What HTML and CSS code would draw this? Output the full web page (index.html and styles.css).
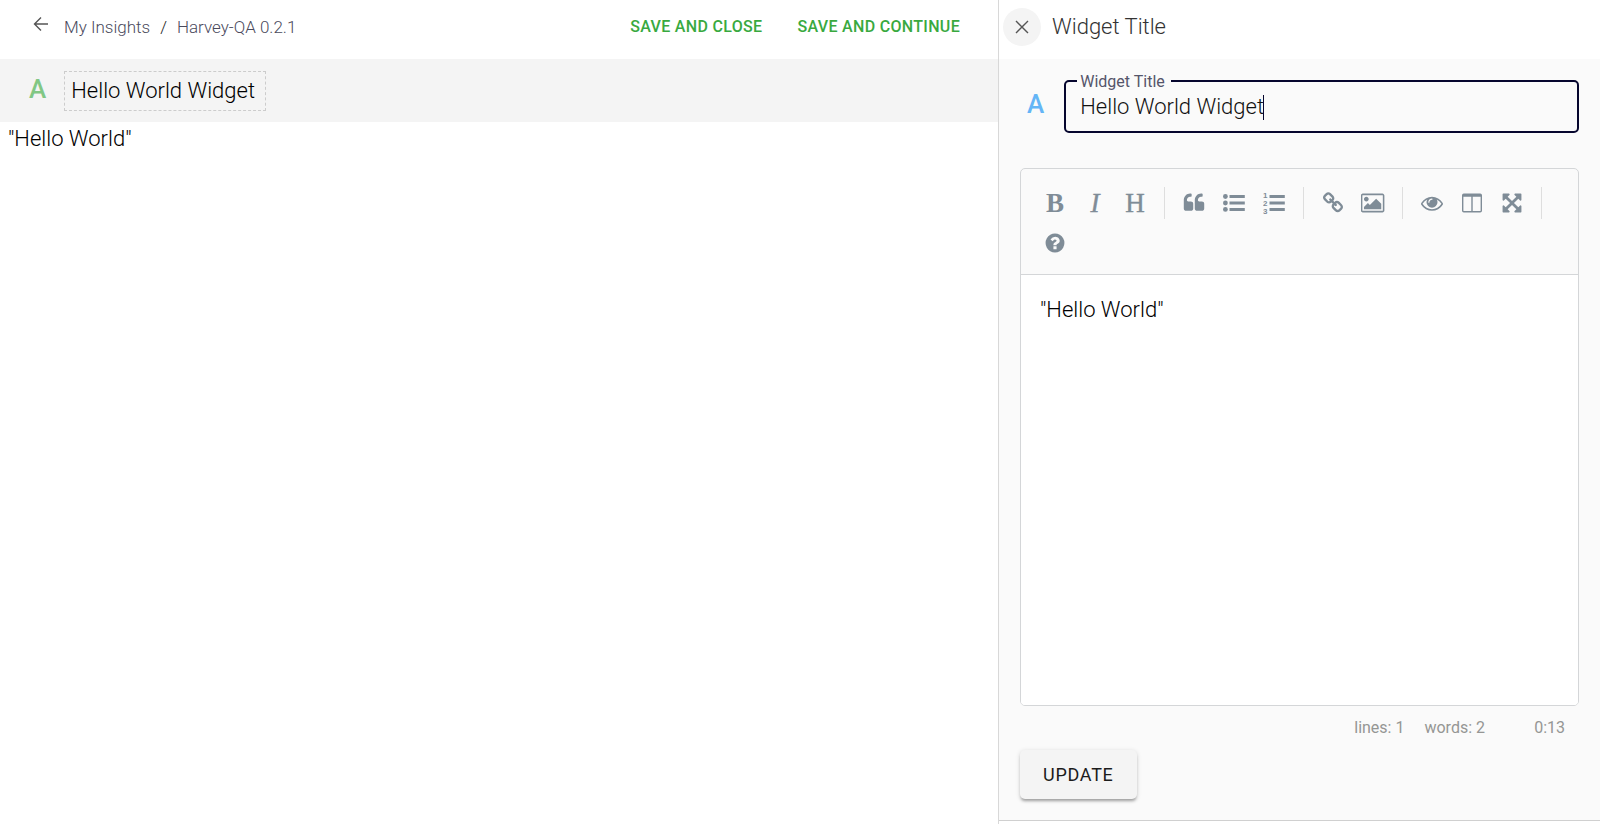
FILE: index.html
```html
<!DOCTYPE html>
<html lang="en">
<head>
<meta charset="utf-8">
<title>Harvey-QA 0.2.1 - My Insights</title>
<link rel="stylesheet" href="styles.css">
</head>
<body>
<div class="app">
  <main class="preview">
    <header class="topbar">
      <button class="back" type="button" aria-label="Back">
        <svg width="24" height="24" viewBox="0 0 24 24" fill="none" stroke="currentColor" stroke-width="1.4"><path d="M20 12H6.500M13 5.500L6.500 12l6.500 6.500"/></svg>
      </button>
      <nav class="crumbs" aria-label="Breadcrumb">
        <a href="#">My Insights</a><span>/</span><a href="#">Harvey-QA 0.2.1</a>
      </nav>
      <div class="actions">
        <button type="button">SAVE AND CLOSE</button>
        <button type="button">SAVE AND CONTINUE</button>
      </div>
    </header>
    <div class="widget-bar">
      <span class="type-icon type-green">A</span>
      <h1 class="widget-name">Hello World Widget</h1>
    </div>
    <p class="widget-body">"Hello World"</p>
  </main>

  <aside class="panel">
    <header class="panel-head">
      <button class="close" type="button" aria-label="Close">
        <svg width="14" height="14" viewBox="0 0 14 14" fill="none" stroke="currentColor" stroke-width="1.4"><path d="M1 1l12 12M13 1L1 13"/></svg>
      </button>
      <h2>Widget Title</h2>
    </header>
    <form class="panel-body">
      <div class="title-row">
        <span class="type-icon type-blue">A</span>
        <fieldset class="field">
          <legend><label for="title">Widget Title</label></legend>
          <input id="title" type="text" value="Hello World Widget">
          <span class="caret"></span>
        </fieldset>
      </div>

      <div class="editor">
        <div class="toolbar" role="toolbar" aria-label="Formatting">
          <button type="button" class="bold" aria-label="Bold">B</button>
          <button type="button" class="italic" aria-label="Italic">I</button>
          <button type="button" class="heading" aria-label="Heading">H</button>
          <i class="sep"></i>
          <button type="button" aria-label="Quote"><svg width="22" height="22" viewBox="0 0 1792 1792"><path d="M832 960v384q0 80-56 136t-136 56h-384q-80 0-136-56t-56-136v-704q0-104 40.500-198.500t109.500-163.500 163.500-109.500 198.500-40.500h64q26 0 45 19t19 45v128q0 26-19 45t-45 19h-64q-106 0-181 75t-75 181v32q0 40 28 68t68 28h224q80 0 136 56t56 136zm896 0v384q0 80-56 136t-136 56h-384q-80 0-136-56t-56-136v-704q0-104 40.500-198.500t109.500-163.500 163.500-109.500 198.500-40.500h64q26 0 45 19t19 45v128q0 26-19 45t-45 19h-64q-106 0-181 75t-75 181v32q0 40 28 68t68 28h224q80 0 136 56t56 136z"/></svg></button>
          <button type="button" aria-label="Bulleted list"><svg width="22" height="22" viewBox="0 0 22 22"><circle cx="2.400" cy="4.500" r="2.400"/><circle cx="2.400" cy="11" r="2.400"/><circle cx="2.400" cy="17.400" r="2.400"/><path d="M6.500 3h15.300v3H6.500zM6.500 9.500h15.300v3H6.500zM6.500 15.900h15.300v3H6.500z"/></svg></button>
          <button type="button" aria-label="Numbered list"><svg class="numbers" width="22" height="26" viewBox="0 -2 22 26"><text x="0" y="6">1</text><text x="0" y="14">2</text><text x="0" y="22">3</text><path d="M6.500 3h15.300v3H6.500zM6.500 9.500h15.300v3H6.500zM6.500 15.900h15.300v3H6.500z"/></svg></button>
          <i class="sep"></i>
          <button type="button" aria-label="Link"><svg width="22" height="22" viewBox="0 0 1792 1792"><path d="M1520 1216q0-40-28-68l-208-208q-28-28-68-28-42 0-72 32 3 3 19 18.500t21.500 21.500 15 19 13 25.500 3.500 27.500q0 40-28 68t-68 28q-15 0-27.500-3.500t-25.500-13-19-15-21.500-21.500-18.500-19q-33 31-33 73 0 40 28 68l206 207q27 27 68 27 40 0 68-26l147-146q28-28 28-67zm-703-705q0-40-28-68l-206-207q-28-28-68-28-39 0-68 27l-147 146q-28 28-28 67 0 40 28 68l208 208q27 27 68 27 42 0 72-31-3-3-19-18.500t-21.500-21.500-15-19-13-25.500-3.500-27.500q0-40 28-68t68-28q15 0 27.500 3.500t25.500 13 19 15 21.500 21.500 18.500 19q33-31 33-73zm895 705q0 120-85 203l-147 146q-83 83-203 83-121 0-204-85l-206-207q-83-83-83-203 0-123 88-209l-88-88q-86 88-208 88-120 0-204-84l-208-208q-84-84-84-204t85-203l147-146q83-83 203-83 121 0 204 85l206 207q83 83 83 203 0 123-88 209l88 88q86-88 208-88 120 0 204 84l208 208q84 84 84 204z"/></svg></button>
          <button type="button" aria-label="Image"><svg width="24" height="22" viewBox="-32 0 1920 1792"><path d="M576 576q0 80-56 136t-136 56-136-56-56-136 56-136 136-56 136 56 56 136zm1024 384v448h-1408v-192l320-320 160 160 512-512zm96-704h-1600q-13 0-22.500 9.500t-9.500 22.500v1216q0 13 9.500 22.500t22.500 9.500h1600q13 0 22.500-9.500t9.500-22.500v-1216q0-13-9.500-22.500t-22.500-9.500zm160 32v1216q0 66-47 113t-113 47h-1600q-66 0-113-47t-47-113v-1216q0-66 47-113t113-47h1600q66 0 113 47t47 113z"/></svg></button>
          <i class="sep"></i>
          <button type="button" aria-label="Preview"><svg width="22" height="22" viewBox="0 0 1792 1792"><path d="M1664 960q-152-236-381-353 61 104 61 225 0 185-131.500 316.500t-316.500 131.500-316.500-131.500-131.500-316.500q0-121 61-225-229 117-381 353 133 205 333.500 326.500t434.500 121.500 434.500-121.500 333.500-326.500zm-720-384q0-20-14-34t-34-14q-125 0-214.500 89.500t-89.500 214.500q0 20 14 34t34 14 34-14 14-34q0-86 61-147t147-61q20 0 34-14t14-34zm848 384q0 34-20 69-140 230-376.500 368.500t-499.500 138.500-499.500-139-376.500-368q-20-35-20-69t20-69q140-229 376.500-368t499.500-139 499.500 139 376.500 368q20 35 20 69z"/></svg></button>
          <button type="button" aria-label="Side by side"><svg width="22" height="22" viewBox="0 0 22 22"><path fill-rule="evenodd" d="M2.800 1.500h16.400q1.800 0 1.800 1.800v15.400q0 1.800-1.800 1.800H2.800Q1 20.500 1 18.700V3.300q0-1.800 1.800-1.800zM2.400 4.800v13.600q0 .7.700.7h7.200V4.800zM11.700 4.800v14.300h7.200q.7 0 .7-.7V4.800z"/></svg></button>
          <button type="button" aria-label="Fullscreen"><svg width="22" height="22" viewBox="0 0 1792 1792"><path d="M1411 541l-355 355 355 355 144-144q29-31 70-14 39 17 39 59v448q0 26-19 45t-45 19h-448q-42 0-59-40-17-39 14-69l144-144-355-355-355 355 144 144q31 30 14 69-17 40-59 40h-448q-26 0-45-19t-19-45v-448q0-42 40-59 39-17 69 14l144 144 355-355-355-355-144 144q-19 19-45 19-12 0-24-5-40-17-40-59v-448q0-26 19-45t45-19h448q42 0 59 40 17 39-14 69l-144 144 355 355 355-355-144-144q-31-30-14-69 17-40 59-40h448q26 0 45 19t19 45v448q0 42-39 59-13 5-25 5-26 0-45-19z"/></svg></button>
          <i class="sep"></i>
          <button type="button" aria-label="Help"><svg width="22" height="22" viewBox="0 0 1792 1792"><path d="M1024 1376v-192q0-14-9-23t-23-9h-192q-14 0-23 9t-9 23v192q0 14 9 23t23 9h192q14 0 23-9t9-23zm256-672q0-88-55.500-163t-138.500-116-170-41q-243 0-371 213-15 24 8 42l132 100q7 6 19 6 16 0 25-12 53-68 86-92 34-24 86-24 48 0 85.500 26t37.500 59q0 38-20 61t-68 45q-63 28-115.500 86.500t-52.500 125.500v36q0 14 9 23t23 9h192q14 0 23-9t9-23q0-19 21.500-49.500t54.500-49.500q32-18 49-28.500t46-35 44.500-48 28-60.500 12.500-81zm384 192q0 209-103 385.500t-279.500 279.500-385.500 103-385.500-103-279.500-279.500-103-385.500 103-385.500 279.500-279.500 385.500-103 385.500 103 279.500 279.500 103 385.500z"/></svg></button>
        </div>
        <textarea class="text" aria-label="Widget text">"Hello World"</textarea>
      </div>
      <div class="status"><span>lines: 1</span><span>words: 2</span><span class="cursor">0:13</span></div>
      <button class="update" type="submit">UPDATE</button>
    </form>
  </aside>
</div>
</body>
</html>
```
FILE: styles.css
```css
* {
  box-sizing: border-box;
}

body {
  margin: 0;
  font-family: Roboto, "Liberation Sans", sans-serif;
  color: #000;
  background: #fff;
}

button {
  padding: 0;
  border: 0;
  background: none;
  font: inherit;
  letter-spacing: inherit;
  color: inherit;
  cursor: pointer;
}

h1,
h2,
p {
  margin: 0;
  font-weight: 300;
}

svg {
  display: block;
  flex: none;
}

.app {
  display: flex;
  min-height: 100vh;
}

.preview {
  flex: 1;
  min-width: 0;
}

.topbar {
  display: flex;
  align-items: center;
  height: 59px;
  padding: 0 38px 6px 28px;
}

.back {
  padding-bottom: 6px;
  color: #555;
}

.crumbs {
  display: flex;
  gap: 10px;
  padding-left: 12px;
  font-size: 17px;
  font-weight: 300;
  line-height: 20px;
  color: #222;
}

.crumbs a {
  color: #4a4a5c;
  text-decoration: none;
}

.actions {
  display: flex;
  gap: 35px;
  margin-left: auto;
  font-size: 16px;
  font-weight: 500;
  letter-spacing: 0.02em;
  color: #39a93f;
}

.widget-bar {
  display: flex;
  align-items: center;
  gap: 18px;
  height: 63px;
  padding: 0 29px;
  background: #f4f4f4;
}

.type-icon {
  font-size: 26px;
  font-weight: 500;
  line-height: 32px;
}

.type-green {
  padding-bottom: 4px;
  color: #81c784;
}

.type-blue {
  padding-top: 4px;
  color: #64b5f6;
}

.widget-name {
  padding: 5px 10px 5px 6px;
  border: 1px dashed #ccc;
  font-size: 22px;
  line-height: 28px;
}

.widget-body {
  padding: 0 8px;
  font-size: 22px;
  line-height: 34px;
}

.panel {
  display: flex;
  flex-direction: column;
  width: 602px;
  padding-bottom: 3px;
  border-left: 1px solid #d8d8d8;
}

.panel-head {
  display: flex;
  align-items: center;
  gap: 11px;
  height: 59px;
  padding: 0 4px 6px;
}

.panel-head h2 {
  font-size: 22px;
  color: #333;
}

.close {
  display: grid;
  place-items: center;
  width: 38px;
  height: 38px;
  border-radius: 50%;
  background: #f4f4f4;
  color: #555;
}

.panel-body {
  display: flex;
  flex: 1;
  flex-direction: column;
  padding: 12px 21px 21px;
  border-bottom: 1px solid #d0d0d0;
  background: #fafafa;
}

.title-row {
  display: flex;
  align-items: center;
  gap: 20px;
  padding-left: 7px;
}

.field {
  position: relative;
  flex: 1;
  min-width: 0;
  margin: 0;
  padding: 0 8px 8px 11px;
  border: 2px solid #06062e;
  border-radius: 5px;
}

.field legend {
  padding: 2px 6px 0 3px;
  font-size: 16px;
  line-height: 18px;
  color: #55556a;
}

.field input {
  display: block;
  width: 100%;
  height: 32px;
  padding: 0 3px;
  border: 0;
  outline: 0;
  background: none;
  font: 300 22px/32px Roboto, "Liberation Sans", sans-serif;
  color: #111;
}

.caret {
  position: absolute;
  left: 197px;
  top: 4px;
  width: 1px;
  height: 25px;
  background: #06062e;
}

.editor {
  display: flex;
  flex: 1;
  flex-direction: column;
  margin-top: 35px;
  border: 1px solid #d4d6d8;
  border-radius: 5px;
  overflow: hidden;
}

.toolbar {
  display: flex;
  flex-wrap: wrap;
  align-items: center;
  padding: 14px 14px 11px;
  border-bottom: 1px solid #d4d6d8;
  color: #7f8c97;
}

.toolbar button {
  display: grid;
  place-items: center;
  width: 40px;
  height: 40px;
  font: 400 27px/30px "Liberation Serif", serif;
}

.toolbar .bold {
  font-weight: 700;
}

.toolbar .italic {
  font-style: italic;
}

.toolbar .italic,
.toolbar .heading {
  -webkit-text-stroke: 0.4px currentColor;
}

.toolbar svg {
  fill: currentColor;
}

.numbers text {
  font: 700 8px "Liberation Sans", sans-serif;
}

.sep {
  width: 1px;
  height: 32px;
  margin: 0 9px;
  background: #dedede;
}

.text {
  display: block;
  flex: 1;
  width: 100%;
  padding: 20px 19px;
  border: 0;
  outline: 0;
  resize: none;
  background: #fff;
  font: 300 22px/30px Roboto, "Liberation Sans", sans-serif;
  color: #000;
}

.status {
  display: flex;
  justify-content: flex-end;
  gap: 20px;
  padding: 12px 14px 13px;
  font-size: 16px;
  line-height: 19px;
  color: #959694;
}

.cursor {
  min-width: 60px;
  text-align: right;
}

.update {
  align-self: flex-start;
  padding: 0 23px;
  border-radius: 5px;
  background: #f4f4f4;
  box-shadow: 0 3px 3px -1px rgba(0, 0, 0, 0.3), 0 1px 5px rgba(0, 0, 0, 0.14);
  font-size: 18px;
  line-height: 49px;
  letter-spacing: 0.04em;
  color: #1c1c1c;
}
```
